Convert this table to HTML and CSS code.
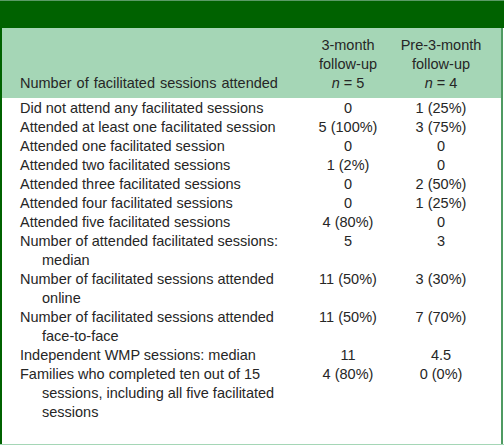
FILE: index.html
```html
<!DOCTYPE html>
<html lang="en">
  <head>
    <meta charset="UTF-8" />
    <meta name="viewport" content="width=device-width, initial-scale=1.0" />
    <title>Facilitated sessions attended</title>
    <link rel="stylesheet" href="styles.css">
  </head>
  <body>
    <div class="table-box">
      <div class="title-bar"></div>
      <div class="table-body">
        <table class="data">
          <colgroup>
            <col class="col-label">
            <col class="col-a">
            <col class="col-b">
          </colgroup>
          <thead>
            <tr>
              <th class="label">Number of facilitated sessions attended</th>
              <th class="num">3-month<br>follow-up<br><i>n</i> = 5</th>
              <th class="num">Pre-3-month<br>follow-up<br><i>n</i> = 4</th>
            </tr>
          </thead>
          <tbody>
            <tr><td class="label">Did not attend any facilitated sessions</td><td class="num">0</td><td class="num">1 (25%)</td></tr>
            <tr><td class="label">Attended at least one facilitated session</td><td class="num">5 (100%)</td><td class="num">3 (75%)</td></tr>
            <tr><td class="label">Attended one facilitated session</td><td class="num">0</td><td class="num">0</td></tr>
            <tr><td class="label">Attended two facilitated sessions</td><td class="num">1 (2%)</td><td class="num">0</td></tr>
            <tr><td class="label">Attended three facilitated sessions</td><td class="num">0</td><td class="num">2 (50%)</td></tr>
            <tr><td class="label">Attended four facilitated sessions</td><td class="num">0</td><td class="num">1 (25%)</td></tr>
            <tr><td class="label">Attended five facilitated sessions</td><td class="num">4 (80%)</td><td class="num">0</td></tr>
            <tr><td class="label">Number of attended facilitated sessions:<br>median</td><td class="num">5</td><td class="num">3</td></tr>
            <tr><td class="label">Number of facilitated sessions attended<br>online</td><td class="num">11 (50%)</td><td class="num">3 (30%)</td></tr>
            <tr><td class="label">Number of facilitated sessions attended<br>face-to-face</td><td class="num">11 (50%)</td><td class="num">7 (70%)</td></tr>
            <tr><td class="label">Independent WMP sessions: median</td><td class="num">11</td><td class="num">4.5</td></tr>
            <tr><td class="label">Families who completed ten out of 15<br>sessions, including all five facilitated<br>sessions</td><td class="num">4 (80%)</td><td class="num">0 (0%)</td></tr>
          </tbody>
        </table>
      </div>
    </div>
  </body>
</html>
```

FILE: styles.css
```css
body {
  margin: 0;
  font-family: "Liberation Sans", Arial, sans-serif;
  font-size: 14.5px;
  color: #262626;
  background: #fff;
}
.table-box {
  width: 504px;
  height: 445px;
  display: flex;
  flex-direction: column;
  border-top: 1px solid #5a9a66;
  border-bottom: 1px solid #a5d6b6;
  box-sizing: border-box;
  overflow: hidden;
}
.title-bar {
  height: 27px;
  background: #006200;
}
.table-body {
  flex: 1;
  border-left: 2px solid #006200;
  border-right: 2px solid #4f9a62;
  margin-right: 1px;
  background: linear-gradient(#a5d6b6, #a5d6b6) top / 100% 70px no-repeat;
}
.data {
  table-layout: fixed;
  width: 484px;
  border-collapse: collapse;
  line-height: 19px;
}
.col-label {
  width: 298px;
}
.col-a {
  width: 96px;
}
.col-b {
  width: 90px;
}
.data th {
  font-weight: normal;
  vertical-align: bottom;
  padding: 8px 0 5px;
}
.data .label {
  text-align: left;
  padding-left: 40px;
  text-indent: -22px;
}
.data thead .label {
  word-spacing: 1px;
}
.data .num {
  text-align: center;
}
.data td {
  padding-top: 1px;
  padding-bottom: 0;
  vertical-align: top;
}
.data tbody tr + tr td {
  padding-top: 0;
}
```
